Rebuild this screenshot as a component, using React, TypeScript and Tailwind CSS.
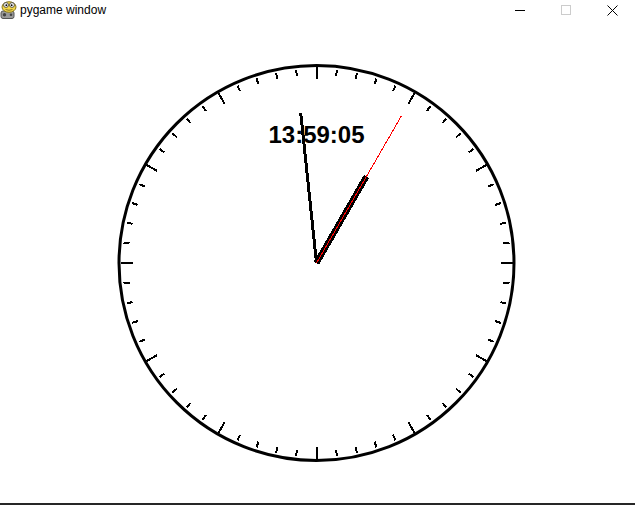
import React from "react";

const CX = 316.5;
const CY = 263;

function pt(angleDeg: number, r: number) {
  const a = (angleDeg * Math.PI) / 180;
  return { x: CX + r * Math.sin(a), y: CY - r * Math.cos(a) };
}

function PygameIcon() {
  return (
    <svg width="18" height="19" viewBox="0 0 18 19">
      <rect x="1" y="10" width="13" height="7.5" rx="2" fill="#9a9a9a" stroke="#555" strokeWidth="1" />
      <circle cx="4.5" cy="13.7" r="1.7" fill="#444" />
      <circle cx="11" cy="13.7" r="1.3" fill="#444" />
      <ellipse cx="9" cy="6" rx="7" ry="5.3" fill="#f2d64b" stroke="#8a7a20" strokeWidth="1" />
      <circle cx="6" cy="4" r="2.4" fill="#fff" stroke="#333" strokeWidth="0.8" />
      <circle cx="12" cy="4" r="2.4" fill="#fff" stroke="#333" strokeWidth="0.8" />
      <circle cx="6.3" cy="4.2" r="0.9" fill="#000" />
      <circle cx="11.7" cy="4.2" r="0.9" fill="#000" />
      <path d="M5.5 8.5 Q9 10 12.5 8.5" stroke="#6b5a10" strokeWidth="0.8" fill="none" />
    </svg>
  );
}

export default function App() {
  const ticks = Array.from({ length: 60 }, (_, i) => {
    const major = i % 5 === 0;
    const a = pt(i * 6, major ? 196 : 194);
    const b = pt(i * 6, major ? 184 : 188);
    return (
      <line
        key={i}
        x1={a.x}
        y1={a.y}
        x2={b.x}
        y2={b.y}
        stroke="#000"
        strokeWidth={2}
        shapeRendering="crispEdges"
      />
    );
  });

  const hour = pt(30, 100);
  const minute = pt(354, 151);
  const second = pt(30, 170);

  return (
    <div
      className="w-[635px] h-[505px] bg-white flex flex-col overflow-hidden"
      style={{ fontFamily: '"Liberation Sans", Arial, sans-serif' }}
    >
      <div className="h-[20px] flex items-center shrink-0">
        <div className="w-[20px] h-[20px] flex items-center">
          <PygameIcon />
        </div>
        <span className="text-[12px] text-black leading-none">pygame window</span>
        <div className="ml-auto flex items-center h-full">
          <div className="w-[46px] h-full flex items-center justify-center">
            <div className="w-[10px] h-px bg-black" />
          </div>
          <div className="w-[46px] h-full flex items-center justify-center">
            <div className="w-[10px] h-[10px] border border-[#cccccc]" />
          </div>
          <div className="w-[46px] h-full flex items-center justify-center">
            <svg width="11" height="11" viewBox="0 0 11 11">
              <path d="M0.5 0.5 L10.5 10.5 M10.5 0.5 L0.5 10.5" stroke="#000" strokeWidth="1" />
            </svg>
          </div>
        </div>
      </div>
      <svg
        className="block shrink-0"
        width="635"
        height="483"
        viewBox="0 20 635 483"
      >
        <circle cx={CX} cy={CY} r={197.5} fill="none" stroke="#000" strokeWidth={3} />
        {ticks}
        <text
          x={CX}
          y={143}
          textAnchor="middle"
          fontSize="24"
          fontWeight="bold"
          fill="#000"
          style={{ fontFamily: '"Liberation Sans", Arial, sans-serif' }}
        >
          13:59:05
        </text>
        <line x1={CX} y1={CY} x2={hour.x} y2={hour.y} stroke="#000" strokeWidth={6} shapeRendering="crispEdges" />
        <line x1={CX} y1={CY} x2={minute.x} y2={minute.y} stroke="#000" strokeWidth={3} shapeRendering="crispEdges" />
        <line x1={CX} y1={CY} x2={second.x} y2={second.y} stroke="#ff0000" strokeWidth={1} shapeRendering="crispEdges" />
      </svg>
      <div className="h-[2px] bg-[#262626] shrink-0" />
    </div>
  );
}
